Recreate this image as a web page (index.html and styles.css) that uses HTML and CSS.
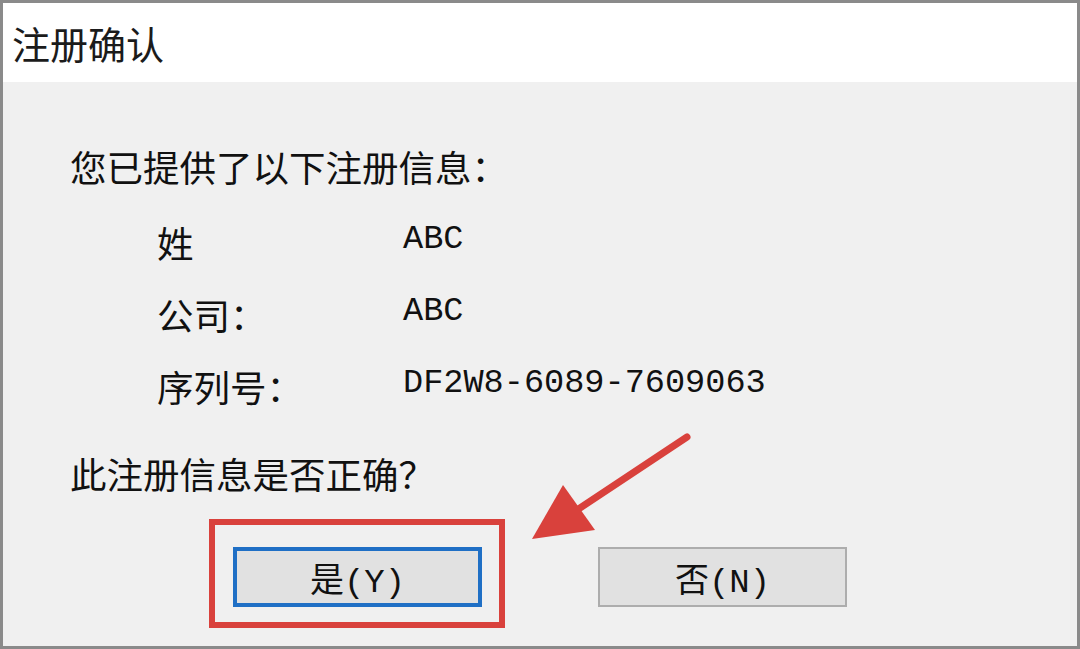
FILE: index.html
```html
<!DOCTYPE html>
<html lang="zh-CN">
<head>
    <meta charset="UTF-8">
    <meta name="viewport" content="width=device-width, initial-scale=1.0">
    <title>注册确认</title>
    <link rel="stylesheet" href="styles.css">
</head>
<body>
    <div class="dialog">
        <div class="titlebar">注册确认</div>
        <div class="content">
            <p class="intro">您已提供了以下注册信息：</p>
            <div class="info">
                <span class="label">姓</span><span class="val">ABC</span>
                <span class="label">公司：</span><span class="val">ABC</span>
                <span class="label">序列号：</span><span class="val">DF2W8-6089-7609063</span>
            </div>
            <p class="question">此注册信息是否正确？</p>
            <div class="buttons">
                <div class="highlight">
                    <button class="btn btn-default">是(Y)</button>
                </div>
                <button class="btn">否(N)</button>
            </div>
        </div>
    </div>

    <!-- annotation arrow pointing at the Yes button -->
    <svg class="arrow" viewBox="0 0 1080 649">
        <line x1="687" y1="437" x2="574" y2="512" stroke="#d9413c" stroke-width="7" stroke-linecap="round"/>
        <polygon points="532,539 563,485 595,530" fill="#d9413c"/>
    </svg>
</body>
</html>
```

FILE: styles.css
```css
body {
    margin: 0;
    position: relative;
    font-family: "Noto Sans CJK SC", sans-serif;
}
.dialog {
    width: 1080px;
    height: 649px;
    box-sizing: border-box;
    border: 3px solid #8a8a8a;
    background: #f0f0f0;
    color: #111;
}
.titlebar {
    height: 79px;
    line-height: 79px;
    background: #fff;
    padding-left: 9px;
    font-size: 38px;
    color: #1b1b1b;
}
.content {
    padding-left: 67px;
    font-size: 36.5px;
}
.intro {
    margin: 65px 0 0;
    line-height: 40px;
}
.info {
    display: grid;
    grid-template-columns: 246px auto;
    grid-auto-rows: 40px;
    row-gap: 32px;
    align-items: start;
    margin: 36px 0 0 87px;
    line-height: 40px;
}
.val {
    font-family: "Liberation Mono", monospace;
    font-size: 33.6px;
    line-height: 32px;
}
.question {
    margin: 47px 0 0;
    line-height: 40px;
}
.buttons {
    display: flex;
    align-items: flex-start;
    gap: 93px;
    margin: 25px 0 0 139px;
}
.highlight {
    border: 6px solid #d9413c;
    padding: 22px 17px 15px 18px;
}
.btn {
    width: 249px;
    height: 60px;
    box-sizing: border-box;
    padding: 0;
    background: #e1e1e1;
    border: 2px solid #adadad;
    color: #111;
    font-family: "Liberation Mono", "Noto Sans CJK SC", monospace;
    font-size: 34px;
}
.btn-default {
    border: 4px solid #1f6fc5;
}
.buttons > .btn {
    margin-top: 28px;
}
.arrow {
    position: absolute;
    left: 0;
    top: 0;
    width: 1080px;
    height: 649px;
    pointer-events: none;
}
```
